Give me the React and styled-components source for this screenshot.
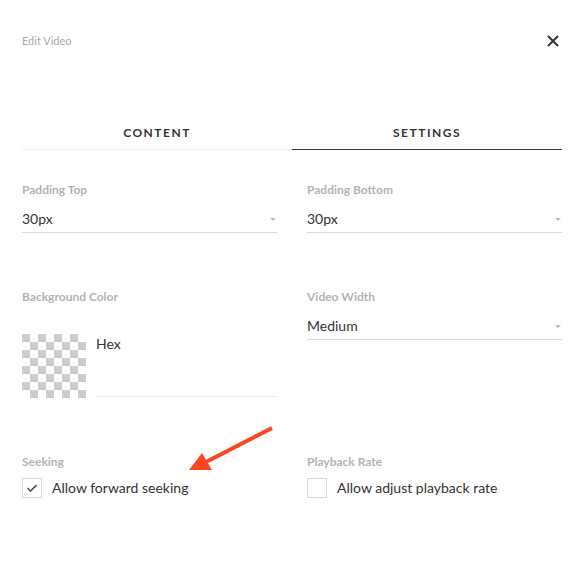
import React, { useState } from "react";
import styled, { createGlobalStyle } from "styled-components";

const GlobalStyle = createGlobalStyle`
  html, body {
    margin: 0;
    padding: 0;
    background: #fff;
  }
  body {
    font-family: Lato, "Open Sans", "Liberation Sans", sans-serif;
    color: #333;
  }
`;

const Page = styled.div`
  position: relative;
  width: 583px;
  height: 574px;
  box-sizing: border-box;
  padding: 34px 21px 0 22px;
`;

const Header = styled.div`
  display: flex;
  align-items: center;
  justify-content: space-between;
  height: 14px;
  margin-bottom: 77px;
`;

const Title = styled.div`
  font-size: 11px;
  line-height: 14px;
  color: #a8a8a8;
`;

const CloseButton = styled.button`
  border: 0;
  background: none;
  padding: 0;
  margin-right: 3px;
  width: 12px;
  height: 12px;
  display: flex;
  cursor: pointer;
`;

const Tabs = styled.div`
  display: grid;
  grid-template-columns: 1fr 1fr;
`;

const Tab = styled.div`
  text-align: center;
  font-size: 12px;
  line-height: 16px;
  font-weight: 700;
  letter-spacing: 1.5px;
  color: #333;
  padding-bottom: 8px;
  border-bottom: 1px solid ${p => (p.$active ? "#333" : "#eeeeee")};
  cursor: pointer;
`;

const Form = styled.div`
  display: grid;
  grid-template-columns: 1fr 1fr;
  column-gap: 30px;
  row-gap: 56px;
  margin-top: 32px;
`;

const Field = styled.div`
  display: flex;
  flex-direction: column;
`;

const Label = styled.div`
  font-size: 12px;
  line-height: 15px;
  font-weight: 700;
  color: #b3b3b3;
`;

const Select = styled.div`
  display: flex;
  align-items: center;
  justify-content: space-between;
  margin-top: 14px;
  padding-bottom: 5px;
  border-bottom: 1px solid #dcdcdc;
  font-size: 14px;
  line-height: 16px;
  color: #333;
`;

const Caret = styled.span`
  width: 0;
  height: 0;
  margin-right: 1px;
  border-left: 3px solid transparent;
  border-right: 3px solid transparent;
  border-top: 3px solid #bdbdbd;
`;

const ColorRow = styled.div`
  display: flex;
  margin-top: 30px;
  gap: 10px;
`;

const Swatch = styled.div`
  width: 64px;
  height: 64px;
  flex: none;
  background-color: #fff;
  background-image:
    linear-gradient(45deg, #cccccc 25%, transparent 25%, transparent 75%, #cccccc 75%),
    linear-gradient(45deg, #cccccc 25%, transparent 25%, transparent 75%, #cccccc 75%);
  background-size: 16px 16px;
  background-position: 8px 0, 0 8px;
`;

const HexInput = styled.div`
  flex: 1;
  height: 63px;
  border-bottom: 1px solid #eeeeee;
  font-size: 14px;
  line-height: 16px;
  padding-top: 2px;
  box-sizing: border-box;
  color: #333;
`;

const CheckRow = styled.label`
  display: flex;
  align-items: center;
  gap: 10px;
  margin-top: 9px;
  font-size: 14px;
  line-height: 20px;
  color: #333;
  cursor: pointer;
`;

const Box = styled.span`
  width: 18px;
  height: 18px;
  border: 1px solid #d6d6d6;
  display: flex;
  align-items: center;
  justify-content: center;
  flex: none;
`;

const ArrowOverlay = styled.svg`
  position: absolute;
  left: 0;
  top: 0;
  pointer-events: none;
`;

const Checkbox = ({ checked, onChange, children }) => (
  <CheckRow onClick={onChange}>
    <Box>
      {checked && (
        <svg width="12" height="10" viewBox="0 0 12 10">
          <polyline
            points="1.5,5 4.5,8 10.5,2"
            fill="none"
            stroke="#555"
            strokeWidth="1.6"
          />
        </svg>
      )}
    </Box>
    <span>{children}</span>
  </CheckRow>
);

export default function App() {
  const [tab, setTab] = useState("settings");
  const [seeking, setSeeking] = useState(true);
  const [rate, setRate] = useState(false);

  return (
    <Page>
      <GlobalStyle />
      <Header>
        <Title>Edit Video</Title>
        <CloseButton aria-label="Close">
          <svg width="12" height="12" viewBox="0 0 12 12">
            <path d="M1 1L11 11M11 1L1 11" stroke="#333" strokeWidth="2" />
          </svg>
        </CloseButton>
      </Header>

      <Tabs>
        <Tab $active={tab === "content"} onClick={() => setTab("content")}>
          CONTENT
        </Tab>
        <Tab $active={tab === "settings"} onClick={() => setTab("settings")}>
          SETTINGS
        </Tab>
      </Tabs>

      <Form>
        <Field>
          <Label>Padding Top</Label>
          <Select>
            30px
            <Caret />
          </Select>
        </Field>
        <Field>
          <Label>Padding Bottom</Label>
          <Select>
            30px
            <Caret />
          </Select>
        </Field>

        <Field>
          <Label>Background Color</Label>
          <ColorRow>
            <Swatch />
            <HexInput>Hex</HexInput>
          </ColorRow>
        </Field>
        <Field>
          <Label>Video Width</Label>
          <Select>
            Medium
            <Caret />
          </Select>
        </Field>

        <Field>
          <Label>Seeking</Label>
          <Checkbox checked={seeking} onChange={() => setSeeking(!seeking)}>
            Allow forward seeking
          </Checkbox>
        </Field>
        <Field>
          <Label>Playback Rate</Label>
          <Checkbox checked={rate} onChange={() => setRate(!rate)}>
            Allow adjust playback rate
          </Checkbox>
        </Field>
      </Form>

      <ArrowOverlay width="583" height="574" viewBox="0 0 583 574">
        <line x1="272" y1="428" x2="204" y2="463" stroke="#fd4520" strokeWidth="4" />
        <polygon points="189,470 202,453 212,470" fill="#fd4520" />
      </ArrowOverlay>
    </Page>
  );
}
